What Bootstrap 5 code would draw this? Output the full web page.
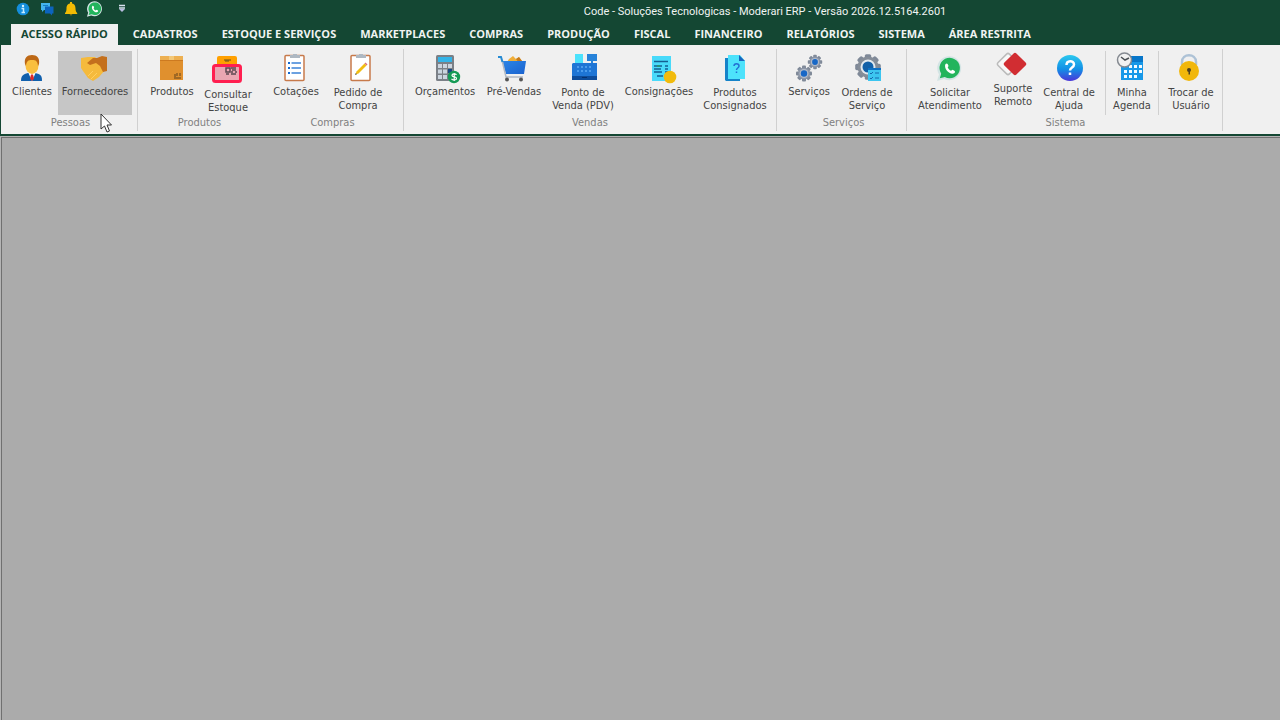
<!DOCTYPE html>
<html lang="pt-BR">
<head>
<meta charset="utf-8">
<meta name="viewport" content="width=device-width, initial-scale=1">
<title>Moderari ERP</title>
<link href="https://cdn.jsdelivr.net/npm/bootstrap@5.3.0/dist/css/bootstrap.min.css" rel="stylesheet">
<style>
:root{--erp-green:#144733}
body{font-family:"DejaVu Sans Condensed","DejaVu Sans",sans-serif;font-size:11px;line-height:13px;background:#ababab;color:#444}
.titlebar{background:var(--erp-green);height:24px}
.quick{gap:4px;padding-left:13px;height:18px}
.quick button{width:20px;height:18px}
.quick .more{margin-left:3px}
.app-title{font-family:Roboto,sans-serif;font-size:11px;color:#f0f4f2;line-height:24px;top:0;left:50%;transform:translateX(-50%);margin-left:125px}
.plain{border:0;background:none;padding:0;color:inherit}
.tabs-row{background:var(--erp-green);font-family:"Open Sans",sans-serif;font-weight:700;height:21px;padding-left:11px}
.tabs-row a{color:#f0f4f2;text-decoration:none;padding:0 12px;line-height:20px;white-space:nowrap}
.tabs-row a.active{background:#f0f0f0;color:var(--erp-green);padding:0 10px;margin-right:3px}
.ribbon{background:#f0f0f0;border-left:1px solid var(--erp-green);border-bottom:2px solid var(--erp-green);height:91px;padding:4px 0 3px}
.rgroup{border-right:1px solid #d0d0d0;flex:none;padding:2px 0 0 4px}
.rgroup.open{border-right-color:transparent}
.g-137{width:137px;padding-left:7px}.g-124{width:124px}.g-142{width:142px}.g-373{width:373px}.g-130{width:130px;padding-left:8px}.g-316{width:316px;padding-left:6px}
.items{gap:2px;height:64px}
.items .divide{width:1px;background:#d0d0d0}
.rbtn{display:flex;flex-direction:column;align-items:center;text-align:center;white-space:nowrap;height:64px}
.rbtn svg,.quick svg{display:block;overflow:visible;flex:none}
.w-s{width:48px}.w-m{width:60px}.w-l{width:74px}
.rbtn.hot{background:#c6c6c6}
.caption-r{color:#808080;text-align:center;padding-top:1px;margin-left:-4px}
.workspace{border:solid #b4b4b4;border-width:1px 0 0 1px;flex:1}
.workspace-in{border:solid #707070;border-width:1px 0 0 1px;flex:1}
.pointer{left:100px;top:113px}
</style>
</head>
<body class="min-vh-100 d-flex flex-column">
<svg class="position-absolute" width="0" height="0" aria-hidden="true">
<defs>
<linearGradient id="blu" x2="0" y2="1"><stop stop-color="#2bc8ee"/><stop offset=".55" stop-color="#138fe6"/><stop offset="1" stop-color="#4b36d8"/></linearGradient>
<linearGradient id="cart" x2="1" y2="1"><stop stop-color="#2c86e6"/><stop offset="1" stop-color="#1a62cf"/></linearGradient>
<g id="cog" fill="#7f8998"><rect x="-2" y="-8" width="4" height="16" rx="1"/><rect x="-2" y="-8" width="4" height="16" rx="1" transform="rotate(45)"/><rect x="-2" y="-8" width="4" height="16" rx="1" transform="rotate(90)"/><rect x="-2" y="-8" width="4" height="16" rx="1" transform="rotate(135)"/></g>
<g id="gear"><use href="#cog"/><circle r="6" fill="#8b95a6"/><circle r="4.500" fill="#b3bbc8"/><circle r="3.200" fill="#1767c6"/></g>
<g id="wa"><path d="M0 24 2 17.500A12 12 0 1 1 7 22Z" fill="#d3e4e4"/><path d="M2.800 21.200 4.200 16.700A10.200 10.200 0 1 1 7.800 20Z" fill="#22b45c"/><path d="M8.500 7C10 5.500 11 7 11.500 9L10.700 10.500C11.500 12 12.500 13 14 13.800L15.500 12.700C18 13.500 18.700 14.500 17.500 16C14 19 6 12 8.500 7Z" fill="#fff"/></g>
</defs>
</svg>
<header>
<div class="titlebar position-relative">
<div class="quick d-flex align-items-center">
<button class="plain" aria-label="Informações"><svg width="20" height="18"><circle cx="10" cy="9" r="6.300" fill="#148edb"/><circle cx="10" cy="6" r="1.200" fill="#d8f2ff"/><path d="M8.500 8.500h2v4M8.500 12.500h3.500" stroke="#c4ebff" stroke-width="1.500" fill="none"/></svg></button>
<button class="plain" aria-label="Mensagens"><svg width="20" height="18"><path d="M4 3h9v7H7l-2 2V10H4z" fill="#43b4ee"/><path d="M8 6.500h8.500v7H15v2l-2-2H8z" fill="#0c64be"/><path d="M6 5.500h5" stroke="#167dc4"/></svg></button>
<button class="plain" aria-label="Notificações"><svg width="20" height="18"><path d="M9 2h2v1.500c3 .7 3.500 3 3.500 5 0 2.500.7 3.500 1.700 4.500v1H4v-1c1-1 1.500-2 1.500-4.500 0-2 .5-4.300 3.500-5z" fill="#f2bc04"/><path d="M8.500 14.500h3l-1.500 1z" fill="#e39c03"/></svg></button>
<button class="plain" aria-label="WhatsApp"><svg width="20" height="18" viewBox="-3 -3 32 29"><use href="#wa"/></svg></button>
<button class="plain more" aria-label="Personalizar"><svg width="20" height="18"><path d="M7 5.500h6M7 8h6" stroke="#d9e1f1" stroke-width="1.300"/><path d="M7 9h6l-3 3z" fill="#b7bce0"/></svg></button>
</div>
<div class="app-title position-absolute text-nowrap">Code - Soluções Tecnologicas - Moderari ERP - Versão 2026.12.5164.2601</div>
</div>
<nav class="tabs-row d-flex" aria-label="Menu principal">
<a class="active" href="#">ACESSO RÁPIDO</a><a href="#">CADASTROS</a><a href="#">ESTOQUE E SERVIÇOS</a><a href="#">MARKETPLACES</a><a href="#">COMPRAS</a><a href="#">PRODUÇÃO</a><a href="#">FISCAL</a><a href="#">FINANCEIRO</a><a href="#">RELATÓRIOS</a><a href="#">SISTEMA</a><a href="#">ÁREA RESTRITA</a>
</nav>
<div class="ribbon d-flex">
<section class="rgroup g-137"><div class="items d-flex">
<button class="plain rbtn w-s"><svg width="32" height="34"><path d="M5 30c0-5 2-7 7-8h7c6 1 7 3 7 8z" fill="#1160ad"/><path d="M12 21h8l-4 9z" fill="#fff"/><path d="M15 23.500h2l1 4-2 2.500-2-2.500z" fill="#dd2c2c"/><ellipse cx="16" cy="14.500" rx="6.500" ry="8.500" fill="#f9bf3f"/><path d="M9 13C8 7 11 4 16 4s8 3 7 9l-1 2C21.500 10 20 9 16 9s-5.500 1-6 6z" fill="#bd6815"/></svg>Clientes</button>
<button class="plain rbtn hot w-l"><svg width="32" height="34"><path d="M2 7 9 6l7 0 5 5 5 8-6 7-6 4-5-3-5-7-2-3z" fill="#f5ba3c"/><path d="m9 25 5-5M12 28l6-6" stroke="#ffcf60" fill="none"/><path d="M8 12 14 7h4l5-2 5 1v14l-4 1-3-6-4-3-6 2z" fill="#c4701d"/></svg>Fornecedores</button>
</div><div class="caption-r">Pessoas</div></section>
<section class="rgroup open g-124"><div class="items d-flex">
<button class="plain rbtn w-m"><svg width="32" height="34"><path d="M4 5h23v24H4z" fill="#e0902e"/><path d="M4 5h23v4H4z" fill="#edb052"/><path d="M13 5h5v4h-5z" fill="#f3c878"/><path d="M4 9.500h23" stroke="#cd7a20"/><path d="M19 23v3m2-4v3m3-3v3m-6 2h7" stroke="#62421a"/></svg>Produtos</button>
<button class="plain rbtn w-s"><svg width="32" height="37"><path d="M5 7q0-2 2-2h16q2 0 2 2v8H5z" fill="#ffa000"/><path d="M12 9h7M13 10h4" stroke="#66501d"/><rect x="1.500" y="14.500" width="27" height="16" rx="2" fill="#e9a6b2" stroke="#ff1f50" stroke-width="3"/><path d="M14 17h4v4h-4zM19 17h5M20 19h4M19 21h2m2 0h2M14 23h3m2 0h5" fill="none" stroke="#5b4750" stroke-width="1.500"/></svg>Consultar<br>Estoque</button>
</div><div class="caption-r">Produtos</div></section>
<section class="rgroup g-142"><div class="items d-flex">
<button class="plain rbtn w-m"><svg width="32" height="34"><rect x="5" y="4.500" width="19" height="25" rx="1" fill="#fff" stroke="#c77a4b" stroke-width="1.500"/><path d="M10 4h3V3h4v1h3v3H10z" fill="#aeb8c2"/><path d="M8 12h2m-2 5h2m-2 5h2" stroke="#1769cf" stroke-width="2"/><path d="M11.500 12H21m-9.500 5H21m-9.500 5H21" stroke="#3d82d6" stroke-width="1.500"/></svg>Cotações</button>
<button class="plain rbtn w-m"><svg width="32" height="35"><rect x="9" y="4.500" width="19" height="25" rx="1" fill="#fff" stroke="#c77a4b" stroke-width="1.500"/><path d="M14 4h3V3h4v1h3v3H14z" fill="#aeb8c2"/><path d="m13.500 23.500 1-3 8-8 2 2-8 8z" fill="#f1bd13"/><path d="m22.500 12.500 1-1 2 2-1 1z" fill="#d8707d"/><path d="m13 24 .7-2 1.300 1.300z" fill="#555"/></svg>Pedido de<br>Compra</button>
</div><div class="caption-r">Compras</div></section>
<section class="rgroup g-373"><div class="items d-flex">
<button class="plain rbtn w-l"><svg width="32" height="34"><rect x="7" y="4" width="18" height="26" rx="1.500" fill="#7b8087"/><path d="M9 6h14v5H9z" fill="#33b4e8"/><path d="M9 13h4v4H9zm5 0h4v4h-4zM19 13h4v4h-4zM9 18.500h4v4H9zm5 0h4v4h-4zM9 24h4v4H9zm5 0h4v4h-4z" fill="#ccd5df"/><path d="M19 18h4v4h-4z" fill="#174a83"/><circle cx="25" cy="26" r="6.200" fill="#159b56"/><path d="M27.500 23.800c-1-1.300-4.500-1.300-4.500.6 0 2.300 4.500.7 4.500 3 0 2-3.800 1.900-5 .4M25.200 22v8" stroke="#fff" stroke-width="1.200" fill="none"/></svg>Orçamentos</button>
<button class="plain rbtn w-m"><svg width="32" height="34"><path d="m9 11 2-3 4-3 3 3 3-2 3 4v2z" fill="#f0ae38"/><path d="m18 8 3-2 3 4-3 2z" fill="#c57a1b"/><path d="M4 10h24l-2 13H8z" fill="url(#cart)"/><path d="m4 9 4 17h17" fill="none" stroke="#b0b8c4" stroke-width="1.500"/><path d="M0 6h3l1.500 5" fill="none" stroke="#278bd3" stroke-width="2"/><circle cx="9" cy="28.500" r="2" fill="#555"/><circle cx="23" cy="28.500" r="2" fill="#555"/></svg>Pré-Vendas</button>
<button class="plain rbtn w-l"><svg width="32" height="35"><path d="M8 3h8v10H8z" fill="#4be2fc"/><path d="M20 3h10v7h-4v3h-2v-3h-4z" fill="#2682d9"/><path d="M6 12h24v13H5V13z" fill="#1e75d5"/><path d="M5 25h25v4H5z" fill="#0d4c9b"/><path d="M10 16h16M10 20h16" stroke="#5aa8f4" stroke-width="1.500" stroke-dasharray="2 2"/><path d="M15 26.500h5" stroke="#06316d"/></svg>Ponto de<br>Venda (PDV)</button>
<button class="plain rbtn w-l"><svg width="32" height="34"><path d="M9 5h19v25H9z" fill="#49dafa"/><path d="M11 10.500h14M11 15h8m3 0h3M11 18h7m4 0h3M11 21h8m3 0h3M14 25h6" stroke="#155f92" stroke-width="1.500"/><path d="M14 15h3" stroke="#2ca94a"/><circle cx="27" cy="26" r="6.300" fill="#f1bb0c"/></svg>Consignações</button>
<button class="plain rbtn w-l"><svg width="32" height="35"><path d="M6 7h15v23H7l-1-1z" fill="#1583c9"/><path d="M9 4h12l5 6v18H9z" fill="#4de2fb"/><path d="M20 4v6h6z" fill="#1765bd"/><path d="M15 15c0-3 5-3 5 0 0 2-2.500 2-2.500 4m0 1.500V22" stroke="#2370d3" stroke-width="1.500" fill="none"/></svg>Produtos<br>Consignados</button>
</div><div class="caption-r">Vendas</div></section>
<section class="rgroup g-130"><div class="items d-flex gap-1">
<button class="plain rbtn w-s"><svg width="32" height="34"><use href="#gear" transform="translate(11 22.500)"/><use href="#gear" transform="translate(22 11) scale(.9)"/></svg>Serviços</button>
<button class="plain rbtn w-m"><svg width="32" height="35"><use href="#cog" transform="translate(17 16) scale(1.600)"/><circle cx="17" cy="16" r="10.500" fill="#858d98"/><circle cx="17" cy="16" r="7.500" fill="#e4e9ee"/><circle cx="17" cy="16" r="5.500" fill="#1260a8"/><path d="M17 17h13v13H17z" fill="#3cc5f0"/><path d="M17 17h13v2H17z" fill="#0d70c4"/><path d="m19 22 1 1 2-2m2 1h4m-9 5 1 1 2-2m2 1h4" stroke="#1668ae" fill="none"/></svg>Ordens de<br>Serviço</button>
</div><div class="caption-r">Serviços</div></section>
<section class="rgroup g-316"><div class="items d-flex">
<button class="plain rbtn w-l"><svg width="32" height="35"><use href="#wa" transform="translate(3 6)"/></svg>Solicitar<br>Atendimento</button>
<button class="plain rbtn w-s"><svg width="32" height="31"><rect x="-8" y="-8" width="16" height="16" rx="2" transform="translate(11 13) rotate(45)" fill="#f7f7f7" stroke="#bbb" stroke-width="1.500"/><rect x="-8.500" y="-8.500" width="17" height="17" rx="2" transform="translate(18 13) rotate(45)" fill="#d12d32"/></svg>Suporte<br>Remoto</button>
<button class="plain rbtn w-m"><svg width="32" height="35"><circle cx="17" cy="17" r="13" fill="url(#blu)"/><path d="M13.500 14c0-5 7.500-5 7.500-.5 0 3-4 3-4 6m0 2v2.500" fill="none" stroke="#fff" stroke-width="2.500"/></svg>Central de<br>Ajuda</button>
<div class="divide ms-1"></div>
<button class="plain rbtn w-s"><svg width="32" height="35"><path d="M5 5h22v24H5z" fill="#1798e8"/><path d="M5 5h22v6H5z" fill="#0876c9"/><path d="M13 14h3v3h-3zm5 0h3v3h-3zm5 0h3v3h-3zM8 19h3v3H8zm5 0h3v3h-3zm5 0h3v3h-3zm5 0h3v3h-3zM8 24h3v3H8zm5 0h3v3h-3zm5 0h3v3h-3z" fill="#f2faff"/><circle cx="8.500" cy="9" r="7" fill="#f2f2f2" stroke="#858a91" stroke-width="1.500"/><path d="m5 6 4 3 4-2" stroke="#4c5156" stroke-width="1.500" fill="none"/></svg>Minha<br>Agenda</button>
<div class="divide"></div>
<button class="plain rbtn w-m"><svg width="32" height="35"><path d="M7 14v-3c0-9 14-9 14 0v3" fill="none" stroke="#adc2d6" stroke-width="2.500"/><circle cx="14" cy="20" r="10" fill="#f1b70b"/><circle cx="14" cy="19" r="2" fill="#4e4220"/><path d="M13.500 19h1.500v4.500h-1.500z" fill="#4e4220"/></svg>Trocar de<br>Usuário</button>
</div><div class="caption-r">Sistema</div></section>
</div>
</header>
<main class="workspace d-flex"><div class="workspace-in"></div></main>
<svg class="pointer position-absolute" width="12" height="20" aria-hidden="true"><path d="M1 1v15l3.500-3 2.500 6 2.500-1L7 12h4.500z" fill="#fff" stroke="#333"/></svg>
<script src="https://cdn.jsdelivr.net/npm/bootstrap@5.3.0/dist/js/bootstrap.bundle.min.js"></script>
</body>
</html>
